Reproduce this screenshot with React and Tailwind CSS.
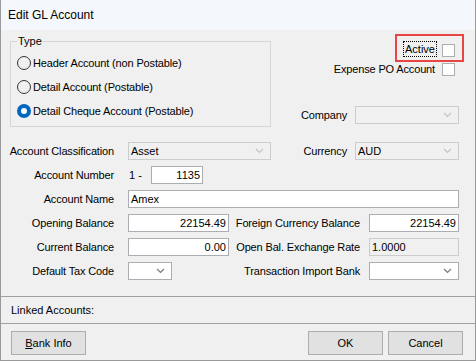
import React from 'react';

const FONT = { fontFamily: '"Liberation Sans", Arial, sans-serif' };
const LABEL = 'text-right text-[11px] tracking-[-0.15px] text-black leading-[18px] whitespace-nowrap';
const BOX = 'h-[18px] border border-[#abadb3] bg-white text-[11px] leading-[16px] px-[2px] text-black';

const Chevron = ({ color }) => (
  <svg width="9" height="6" viewBox="0 0 9 6" fill="none" stroke={color} strokeWidth="1.2">
    <path d="M1 1l3.5 3.5L8 1" />
  </svg>
);

function Combo({ width, value, disabled, className = '' }) {
  return (
    <div
      className={`h-[18px] flex items-center justify-between pl-[2px] pr-[6px] border text-[11px] ${disabled ? 'border-[#cccccc] bg-[#f0f0f0]' : 'border-[#abadb3] bg-white'} ${className}`}
      style={{ width }}
    >
      <span className="text-black">{value}</span>
      <Chevron color={disabled ? '#c4c4c4' : '#7a7a7a'} />
    </div>
  );
}

function Radio({ checked, label }) {
  return (
    <div className="h-[24px] flex items-center gap-[2px]">
      {checked ? (
        <span className="w-[14px] h-[14px] rounded-full bg-[#0067c0] flex items-center justify-center">
          <span className="w-[6px] h-[6px] rounded-full bg-white" />
        </span>
      ) : (
        <span className="w-[14px] h-[14px] rounded-full border border-[#333333] bg-[#f0f0f0]" />
      )}
      <span className="text-[11px] tracking-[-0.15px] text-black">{label}</span>
    </div>
  );
}

const Check = () => <span className="block flex-none w-[13px] h-[13px] border border-[#adadad] bg-white" />;

function Button({ children }) {
  return (
    <button
      type="button"
      className="w-[75px] h-[24px] border border-[#adadad] bg-[#e1e1e1] text-[11px] text-black"
    >
      {children}
    </button>
  );
}

export default function App() {
  return (
    <div className="relative w-[476px] h-[361px] bg-[#f0f0f0] border-x border-b border-[#999999] flex flex-col" style={FONT}>
      <div className="h-[30px] bg-[#f4f7fc] flex items-center pl-[7px] text-[12px] text-black">
        Edit GL Account
      </div>

      <div className="flex h-[97px]">
        <div className="relative ml-[9px] mt-[11px] w-[261px] h-[86px] border border-[#d5d5d5] pl-[6px] pt-[9px]">
          <span className="absolute -top-[7px] left-[6px] px-[1px] bg-[#f0f0f0] text-[11px] leading-[13px] text-black">Type</span>
          <Radio label="Header Account (non Postable)" />
          <Radio label="Detail Account (Postable)" />
          <Radio checked label="Detail Cheque Account (Postable)" />
        </div>

        <div className="flex-1 flex flex-col items-end">
          <div className="mt-[11px] h-[16px] flex items-start pr-[20px]">
            <span className="h-[16px] px-[1px] border border-dotted border-black text-[11px] leading-[14px] text-black">Active</span>
            <span className="ml-[5px] mt-[3px] flex"><Check /></span>
          </div>
          <div className="mt-[6px] h-[13px] flex items-center pr-[20px]">
            <span className="text-[11px] tracking-[-0.15px] text-black">Expense PO Account</span>
            <span className="ml-[7px] flex"><Check /></span>
          </div>
          <div className="mt-[30px] flex items-center pr-[16px]">
            <span className={LABEL}>Company</span>
            <Combo width={104} value="" disabled className="ml-[8px]" />
          </div>
        </div>
      </div>

      <div className="mt-[15px] flex flex-col gap-[6px]">
        <div className="flex items-center">
          <div className={`${LABEL} w-[113px]`}>Account Classification</div>
          <Combo width={143} value="Asset" disabled className="ml-[14px]" />
          <div className={`${LABEL} w-[76px]`}>Currency</div>
          <Combo width={104} value="AUD" disabled className="ml-[8px] font-medium" />
        </div>
        <div className="flex items-center">
          <div className={`${LABEL} w-[113px]`}>Account Number</div>
          <span className="ml-[15px] w-[22px] text-[11px] text-black">1 -</span>
          <div className={`${BOX} w-[52px] text-right`}>1135</div>
        </div>
        <div className="flex items-center">
          <div className={`${LABEL} w-[113px]`}>Account Name</div>
          <div className={`${BOX} ml-[14px] w-[331px]`}>Amex</div>
        </div>
        <div className="flex items-center">
          <div className={`${LABEL} w-[113px]`}>Opening Balance</div>
          <div className={`${BOX} ml-[14px] w-[101px] text-right`}>22154.49</div>
          <div className={`${LABEL} w-[131px]`}>Foreign Currency Balance</div>
          <div className={`${BOX} ml-[9px] w-[90px] text-right`}>22154.49</div>
        </div>
        <div className="flex items-center">
          <div className={`${LABEL} w-[113px]`}>Current Balance</div>
          <div className={`${BOX} ml-[14px] w-[101px] text-right bg-[#ffffe1]`}>0.00</div>
          <div className={`${LABEL} w-[131px]`}>Open Bal. Exchange Rate</div>
          <div className={`${BOX} ml-[9px] w-[90px] !bg-[#f0f0f0] border-[#cccccc]`}>1.0000</div>
        </div>
        <div className="flex items-center">
          <div className={`${LABEL} w-[113px]`}>Default Tax Code</div>
          <Combo width={44} value="" className="ml-[14px]" />
          <div className={`${LABEL} w-[188px]`}>Transaction Import Bank</div>
          <Combo width={90} value="" className="ml-[9px]" />
        </div>
      </div>

      <div className="mt-[16px] border-t border-b border-[#a0a0a0] h-[28px] flex items-center pl-[10px] text-[11px] text-black">
        Linked Accounts:
      </div>

      <div className="mt-[7px] flex items-center pl-[10px] pr-[12px]">
        <Button><span className="underline">B</span>ank Info</Button>
        <div className="flex-1" />
        <Button>OK</Button>
        <div className="w-[5px]" />
        <Button>Cancel</Button>
      </div>

      <div className="absolute left-[394px] top-[34px] w-[69px] h-[28px] border-2 border-[#e84545]" />
    </div>
  );
}
